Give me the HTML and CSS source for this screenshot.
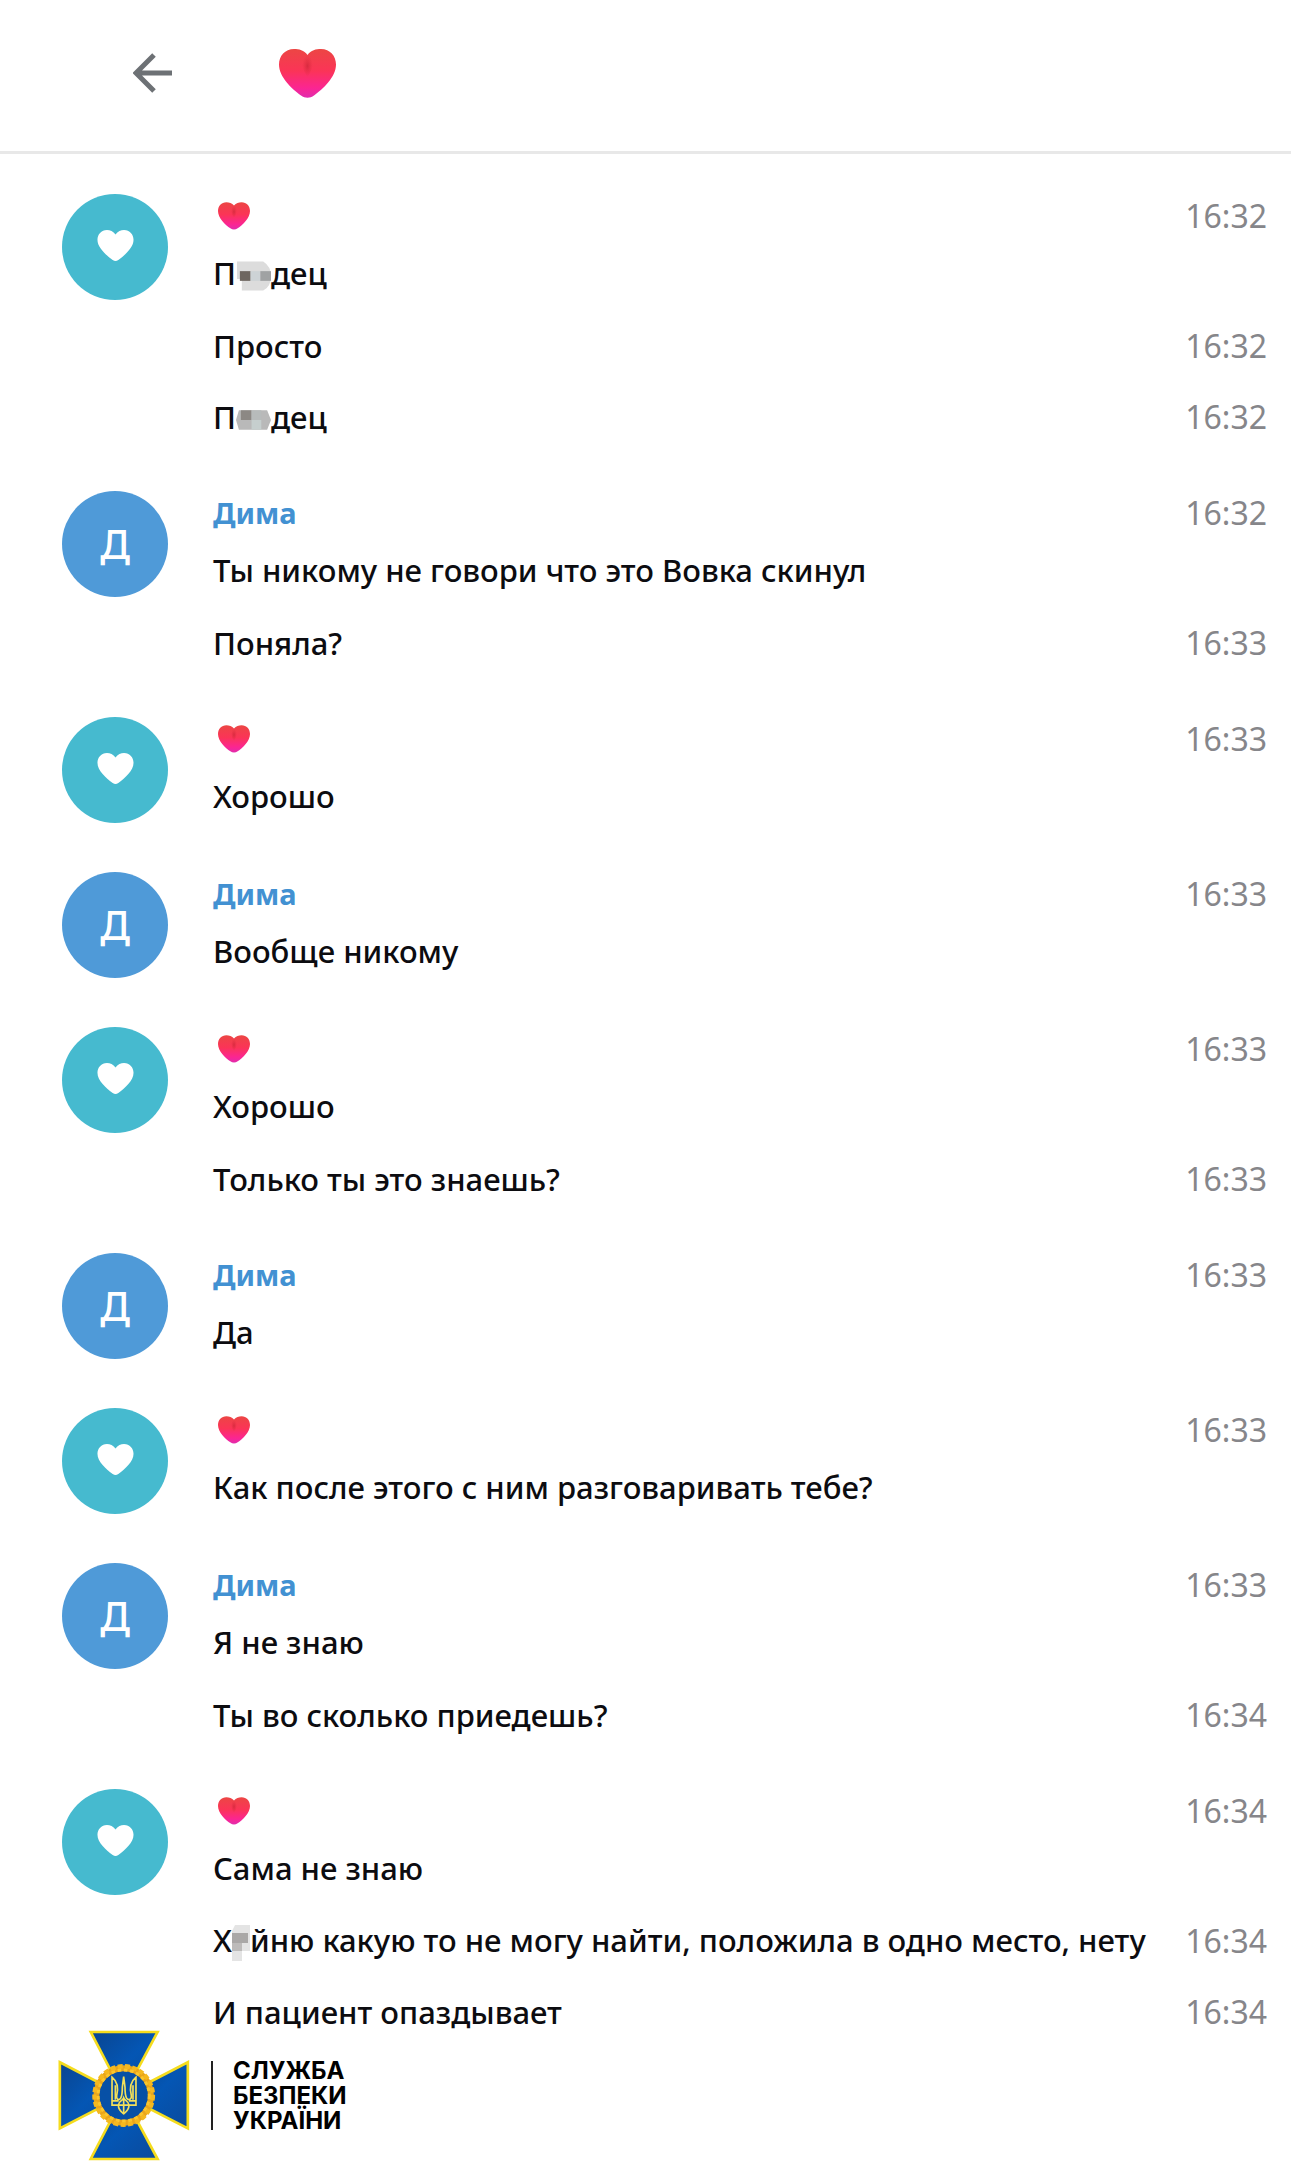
FILE: index.html
```html
<!DOCTYPE html>
<html lang="ru">
<head>
    <meta charset="UTF-8">
    <meta name="viewport" content="width=device-width, initial-scale=1.0">
    <title>Chat history</title>
    <link rel="stylesheet" href="styles.css">
</head>
<body>

    <!-- shared shapes -->
    <svg class="defs" width="0" height="0" aria-hidden="true">
        <defs>
            <linearGradient id="heart-fill" x1="0" y1="0" x2="0" y2="1">
                <stop offset="0" stop-color="#ec4644"/>
                <stop offset="0.45" stop-color="#fb3457"/>
                <stop offset="0.8" stop-color="#fb2592"/>
                <stop offset="1" stop-color="#e02cae"/>
            </linearGradient>
            <radialGradient id="heart-shade">
                <stop offset="0" stop-color="#c42232" stop-opacity="0.6"/>
                <stop offset="1" stop-color="#d8283c" stop-opacity="0"/>
            </radialGradient>
            <linearGradient id="blue" x1="0" y1="0" x2="1" y2="1">
                <stop offset="0" stop-color="#0a4590"/>
                <stop offset="0.5" stop-color="#0456b4"/>
                <stop offset="1" stop-color="#0b4a9c"/>
            </linearGradient>
            <symbol id="heart" viewBox="0 0 57 49">
                <path d="M28.500 6C25 1 20 0 15 0C6 0 0 7 0 15.500C0 28 13 40 22 46.500C26 49.500 31 49.500 35 46.500C44 40 57 28 57 15.500C57 7 51 0 42 0C37 0 32 1 28.500 6Z" fill="url(#heart-fill)"/>
                <path d="M28.500 6C23 9 20 16 28.500 28C37 16 34 9 28.500 6Z" fill="url(#heart-shade)"/>
            </symbol>
            <symbol id="heart-plain" viewBox="0 0 57 49">
                <path d="M28.500 7C25 2 20 0 15 0C6 0 0 7 0 15.500C0 28 13 39 24 47.500C27 49.500 30 49.500 33 47.500C44 39 57 28 57 15.500C57 7 51 0 42 0C37 0 32 2 28.500 7Z" fill="#fff"/>
            </symbol>
        </defs>
    </svg>

    <header class="page-header">
        <a class="back" href="#" aria-label="Назад">
            <svg width="40" height="40" viewBox="0 0 40 40" fill="none" stroke="#6d7175" stroke-width="5">
                <path d="M39 20H3M21 2L3 20L21 38"/>
            </svg>
        </a>
        <svg class="title-heart" role="img" aria-label="❤"><use href="#heart"/></svg>
    </header>

    <main class="history">
        <section class="group">
            <div class="avatar teal"><svg><use href="#heart-plain"/></svg></div>
            <div class="body">
                <div class="head"><svg class="name-heart"><use href="#heart"/></svg><time>16:32</time></div>
                <div class="message"><p>П<svg class="mosaic" width="35" height="30" viewBox="0 0 36 30"><path d="M1 0H28Q36 5 36 15Q36 26 28 30H6V18H1Z" fill="#dcdcdc"/><path d="M4 10H15V20H4Z" fill="#6e6660"/><path d="M15 10H25V20H15Z" fill="#cdd3d6"/><path d="M25 10H36V20H25Z" fill="#a0a2a3"/></svg>дец</p></div>
                <div class="message"><p>Просто</p><time>16:32</time></div>
                <div class="message"><p>П<svg class="mosaic" width="35" height="30" viewBox="0 0 36 30"><path d="M3 5H32L36 15L32 25H3L0 15Z" fill="#b9b9b9"/><path d="M5 5H16V15H5Z" fill="#8c8884"/><path d="M16 5H26V15H16Z" fill="#b7bbbb"/><path d="M16 15H26V25H16Z" fill="#c6cfce"/></svg>дец</p><time>16:32</time></div>
            </div>
        </section>

        <section class="group">
            <div class="avatar blue">Д</div>
            <div class="body">
                <div class="head"><span class="name">Дима</span><time>16:32</time></div>
                <div class="message"><p>Ты никому не говори что это Вовка скинул</p></div>
                <div class="message"><p>Поняла?</p><time>16:33</time></div>
            </div>
        </section>

        <section class="group">
            <div class="avatar teal"><svg><use href="#heart-plain"/></svg></div>
            <div class="body">
                <div class="head"><svg class="name-heart"><use href="#heart"/></svg><time>16:33</time></div>
                <div class="message"><p>Хорошо</p></div>
            </div>
        </section>

        <section class="group">
            <div class="avatar blue">Д</div>
            <div class="body">
                <div class="head"><span class="name">Дима</span><time>16:33</time></div>
                <div class="message"><p>Вообще никому</p></div>
            </div>
        </section>

        <section class="group">
            <div class="avatar teal"><svg><use href="#heart-plain"/></svg></div>
            <div class="body">
                <div class="head"><svg class="name-heart"><use href="#heart"/></svg><time>16:33</time></div>
                <div class="message"><p>Хорошо</p></div>
                <div class="message"><p>Только ты это знаешь?</p><time>16:33</time></div>
            </div>
        </section>

        <section class="group">
            <div class="avatar blue">Д</div>
            <div class="body">
                <div class="head"><span class="name">Дима</span><time>16:33</time></div>
                <div class="message"><p>Да</p></div>
            </div>
        </section>

        <section class="group">
            <div class="avatar teal"><svg><use href="#heart-plain"/></svg></div>
            <div class="body">
                <div class="head"><svg class="name-heart"><use href="#heart"/></svg><time>16:33</time></div>
                <div class="message"><p>Как после этого с ним разговаривать тебе?</p></div>
            </div>
        </section>

        <section class="group">
            <div class="avatar blue">Д</div>
            <div class="body">
                <div class="head"><span class="name">Дима</span><time>16:33</time></div>
                <div class="message"><p>Я не знаю</p></div>
                <div class="message"><p>Ты во сколько приедешь?</p><time>16:34</time></div>
            </div>
        </section>

        <section class="group">
            <div class="avatar teal"><svg><use href="#heart-plain"/></svg></div>
            <div class="body">
                <div class="head"><svg class="name-heart"><use href="#heart"/></svg><time>16:34</time></div>
                <div class="message"><p>Сама не знаю</p></div>
                <div class="message"><p>Х<svg class="mosaic" width="18" height="36" viewBox="0 0 18 36"><path d="M3 0H18V26H10V36H0V6Z" fill="#e4e4e4"/><path d="M0 8H16V18H0Z" fill="#aaa8a7"/><path d="M0 18H10V26H0Z" fill="#bdbbba"/></svg>йню какую то не могу найти, положила в одно место, нету</p><time>16:34</time></div>
                <div class="message"><p>И пациент опаздывает</p><time>16:34</time></div>
            </div>
        </section>
    </main>

    <footer class="brand">
        <svg class="emblem" viewBox="56 58 396 394" aria-hidden="true">
            <g fill="url(#blue)" stroke="#f5dc1e" stroke-width="8">
                <path d="M154 64H355L253 255Z"/>
                <path d="M154 446H355L253 255Z"/>
                <path d="M61 155V354L253 255Z"/>
                <path d="M446 155V354L253 255Z"/>
            </g>
            <circle cx="253" cy="255" r="82" fill="#0750a6"/>
            <circle cx="253" cy="255" r="82" fill="none" stroke="#e9a51c" stroke-width="18"/>
            <circle cx="253" cy="255" r="88" fill="none" stroke="#f5b81f" stroke-width="13" stroke-dasharray="15 7"/>
            <circle cx="253" cy="255" r="77" fill="none" stroke="#fbc62c" stroke-width="9" stroke-dasharray="11 8"/>
            <g fill="none" stroke="#f4e05a" stroke-width="5">
                <path d="M218 200V284H237C237 298 245 304 253 310C261 304 269 298 269 284H290V200C274 213 271 235 276 255C278 266 268 271 262 263C257 255 257 245 257 230L253 198L249 230C249 245 249 255 244 263C238 271 230 266 232 255C237 235 234 213 218 200Z"/>
                <path d="M228 224V268M281 224V268M253 262V310M218 271H238M269 271H290M237 284C239 270 250 272 253 262C257 272 267 270 269 284M237 284H269"/>
            </g>
        </svg>
        <div class="divider"></div>
        <div class="brand-name">СЛУЖБА<br>БЕЗПЕКИ<br>УКРАЇНИ</div>
    </footer>

</body>
</html>
```

FILE: styles.css
```css
body {
    margin: 0;
    font-family: "Noto Sans", "Open Sans", sans-serif;
    font-size: 31px;
    line-height: 40px;
    background-color: white;
    color: #0c0c10;
}

p {
    margin: 0;
}

.defs {
    position: absolute;
}

.page-header {
    display: flex;
    align-items: center;
    height: 146px;
    padding: 0 133px;
    gap: 106px;
    padding-bottom: 5px;
    border-bottom: 3px solid #e8e8e8;
}

.back {
    display: flex;
}

.title-heart {
    width: 57px;
    height: 49px;
}

.history {
    padding: 40px 24px 0 62px;
}

.group {
    display: flex;
    gap: 45px;
    margin-bottom: 39px;
}

.group:last-child {
    margin-bottom: 0;
}

.avatar {
    display: flex;
    align-items: center;
    justify-content: center;
    flex-shrink: 0;
    width: 106px;
    height: 106px;
    border-radius: 50%;
    color: white;
    font-size: 40px;
    font-weight: 500;
}

.avatar svg {
    width: 37px;
    height: 31px;
    margin-bottom: 4px;
}

.teal {
    background-color: #46bacf;
}

.blue {
    background-color: #4f9ad8;
}

.body {
    flex: 1;
}

.head, .message {
    display: flex;
    align-items: center;
    justify-content: space-between;
}

.head {
    height: 43px;
}

.message {
    min-height: 71px;
}

.head + .message {
    margin-bottom: 2px;
}

.message p {
    font-weight: 500;
}

.name {
    color: #4291d2;
    font-size: 29px;
    font-weight: bold;
}

.name-heart {
    width: 32px;
    height: 28px;
    margin-left: 5px;
}

.mosaic {
    vertical-align: middle;
}

time {
    color: #86868a;
    font-size: 32px;
}

.brand {
    display: flex;
    align-items: center;
    margin-top: -17px;
    padding: 0 58px 18px;
}

.emblem {
    width: 132px;
    height: 131px;
}

.divider {
    width: 2px;
    height: 69px;
    margin: 0 20px 0 21px;
    background-color: #222;
}

.brand-name {
    color: black;
    font-family: Inter, sans-serif;
    font-size: 24px;
    font-weight: bold;
    line-height: 25px;
}
```
